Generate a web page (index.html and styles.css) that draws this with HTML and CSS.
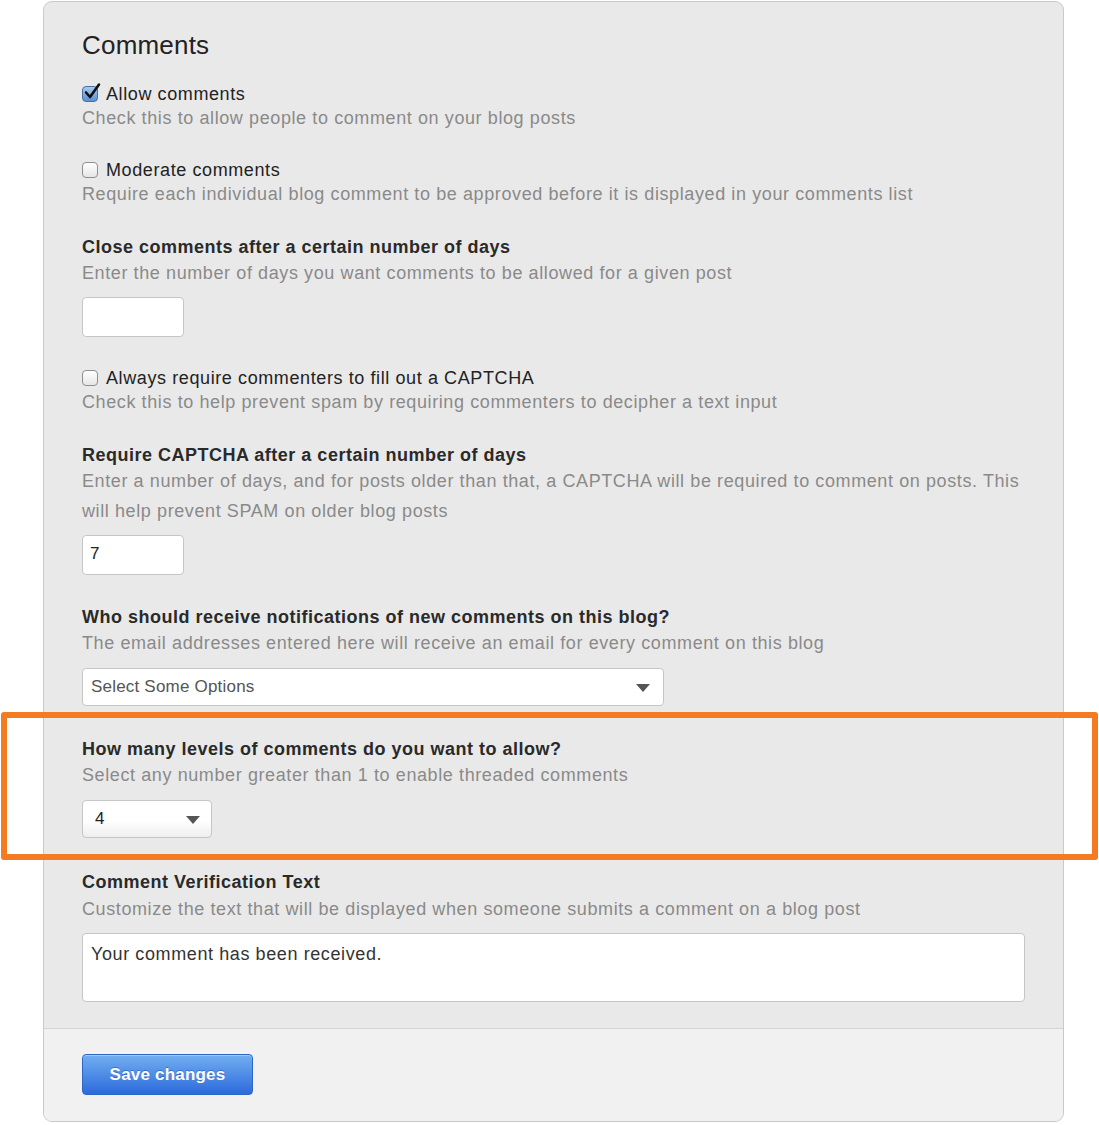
FILE: index.html
```html
<!DOCTYPE html>
<html lang="en">
<head>
<meta charset="utf-8">
<title>Comments settings</title>
<link rel="stylesheet" href="styles.css">
</head>
<body>
<div class="page">
  <form class="panel">
    <div class="panel-body">
      <h2 class="title">Comments</h2>

      <div class="group first">
        <label class="check-label">
          <span class="checkbox checked">
            <svg viewBox="0 0 20 20" width="20" height="20" class="tick"><path d="M4 10.5 L8 15 L17 2.5" fill="none" stroke="#111" stroke-width="2.6" stroke-linecap="round" stroke-linejoin="round"/></svg>
          </span>
          Allow comments
        </label>
        <p class="help">Check this to allow people to comment on your blog posts</p>
      </div>

      <div class="group check-group">
        <label class="check-label"><span class="checkbox"></span>Moderate comments</label>
        <p class="help">Require each individual blog comment to be approved before it is displayed in your comments list</p>
      </div>

      <div class="group">
        <h3 class="field-title">Close comments after a certain number of days</h3>
        <p class="help">Enter the number of days you want comments to be allowed for a given post</p>
        <div class="text-input small"></div>
      </div>

      <div class="group">
        <label class="check-label"><span class="checkbox"></span>Always require commenters to fill out a CAPTCHA</label>
        <p class="help">Check this to help prevent spam by requiring commenters to decipher a text input</p>
      </div>

      <div class="group">
        <h3 class="field-title">Require CAPTCHA after a certain number of days</h3>
        <p class="help wrap">Enter a number of days, and for posts older than that, a CAPTCHA will be required to comment on posts. This will help prevent SPAM on older blog posts</p>
        <div class="text-input small tight">7</div>
      </div>

      <div class="group after-input">
        <h3 class="field-title">Who should receive notifications of new comments on this blog?</h3>
        <p class="help">The email addresses entered here will receive an email for every comment on this blog</p>
        <div class="select wide"><span class="placeholder">Select Some Options</span><span class="arrow"></span></div>
      </div>

      <div class="group after-select">
        <h3 class="field-title">How many levels of comments do you want to allow?</h3>
        <p class="help">Select any number greater than 1 to enable threaded comments</p>
        <div class="select narrow"><span class="value">4</span><span class="arrow"></span></div>
      </div>

      <div class="group last">
        <h3 class="field-title">Comment Verification Text</h3>
        <p class="help">Customize the text that will be displayed when someone submits a comment on a blog post</p>
        <div class="textarea">Your comment has been received.</div>
      </div>
    </div>
    <div class="panel-footer">
      <button type="button" class="btn-primary">Save changes</button>
    </div>
  </form>
  <div class="highlight"></div>
</div>
</body>
</html>
```

FILE: styles.css
```css
* { box-sizing: border-box; }

html, body {
  margin: 0;
  padding: 0;
  background: #ffffff;
}

body {
  font-family: "Liberation Sans", Arial, Helvetica, sans-serif;
  font-size: 18px;
  letter-spacing: 0.6px;
  color: #2b2b2b;
}

.page {
  position: relative;
  width: 1099px;
  height: 1125px;
  padding-top: 1px;
}

.panel {
  margin: 0 0 0 43px;
  width: 1021px;
  height: 1121px;
  border: 1px solid #c9c9c9;
  border-radius: 9px;
  background: #e9e9e9;
  overflow: hidden;
  display: flex;
  flex-direction: column;
}

.panel-body {
  padding: 28px 38px 0 38px;
  flex: 1;
}

.title {
  margin: 0;
  font-size: 26px;
  letter-spacing: 0.2px;
  line-height: 30px;
  font-weight: normal;
  color: #222;
}

.group { margin-top: 29px; }
.group.first { margin-top: 22px; }
.group.check-group { margin-top: 28px; }
.group.after-input { margin-top: 30px; }
.group.after-select { margin-top: 31px; }
.group.last { margin-top: 32px; }
.group.last .help { margin-top: 3px; }
.group.last .textarea { margin-top: 12px; }

.check-label {
  display: flex;
  align-items: center;
  line-height: 24px;
  color: #222;
}

.checkbox {
  position: relative;
  width: 16px;
  height: 16px;
  margin-right: 8px;
  border: 1px solid #8f8f8f;
  border-radius: 4px;
  background: linear-gradient(#ffffff, #e6e6e6);
  flex: none;
}

.checkbox.checked {
  border-color: #4a6f9e;
  background: linear-gradient(#a9c9f0, #5c8fd6);
}

.tick {
  position: absolute;
  left: -1px;
  top: -5px;
}

.field-title {
  margin: 0;
  font-size: 18px;
  letter-spacing: 0.5px;
  line-height: 24px;
  font-weight: bold;
  color: #2a2a2a;
}

.help {
  margin: 2px 0 0 0;
  line-height: 24px;
  color: #8a8a8a;
}

.check-label + .help { margin-top: 0; }

.help.wrap {
  margin-top: -1px;
  line-height: 30px;
}

.text-input {
  margin-top: 12px;
  height: 40px;
  background: #fff;
  border: 1px solid #c6c6c6;
  border-radius: 4px;
  padding: 7px 7px;
  line-height: 22px;
  font-size: 17px;
  color: #222;
}

.text-input.small { width: 102px; }
.text-input.tight { margin-top: 9px; }

.select {
  margin-top: 13px;
  height: 38px;
  background: linear-gradient(#ffffff 55%, #eeeeee);
  border: 1px solid #c6c6c6;
  border-radius: 4px;
  display: flex;
  align-items: center;
  justify-content: space-between;
  padding: 0 13px 0 8px;
}

.select.wide { width: 582px; background: #fff; }
.select.narrow { width: 130px; padding-left: 12px; padding-right: 11px; }

.placeholder {
  font-size: 17px;
  color: #555;
  letter-spacing: 0.2px;
}

.value { color: #222; font-size: 17px; }

.arrow {
  width: 0;
  height: 0;
  border-left: 7px solid transparent;
  border-right: 7px solid transparent;
  border-top: 8px solid #555;
  margin-top: 2px;
}

.textarea {
  margin-top: 13px;
  height: 69px;
  background: #fff;
  border: 1px solid #c6c6c6;
  border-radius: 4px;
  padding: 8px 8px;
  line-height: 24px;
  color: #333;
}

.panel-footer {
  border-top: 1px solid #d4d4d4;
  background: #f1f1f1;
  height: 93px;
  padding: 25px 38px 0 38px;
}

.btn-primary {
  width: 171px;
  height: 41px;
  border: 1px solid #2f66c4;
  border-radius: 4px;
  background: linear-gradient(#72aef0, #2c6bdc);
  color: #fff;
  font-family: "Liberation Sans", Arial, Helvetica, sans-serif;
  font-size: 17px;
  letter-spacing: 0.2px;
  font-weight: bold;
  text-shadow: 0 -1px 0 rgba(0, 40, 120, 0.35);
  box-shadow: inset 0 1px 0 rgba(255, 255, 255, 0.35);
  padding: 0;
}

.highlight {
  position: absolute;
  left: 1px;
  top: 712px;
  width: 1097px;
  height: 148px;
  border: 6px solid #f47b22;
  border-radius: 3px;
  pointer-events: none;
}
```
